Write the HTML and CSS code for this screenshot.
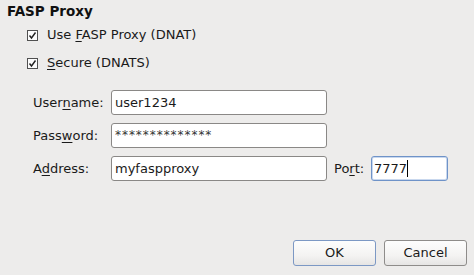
FILE: index.html
```html
<!DOCTYPE html>
<html>
<head>
<meta charset="utf-8">
<link rel="stylesheet" href="styles.css">
</head>
<body>
<div class="dialog">
  <div class="title">FASP Proxy</div>
  <div class="checks">
    <label class="check">
      <svg class="box" width="11" height="11" viewBox="0 0 11 11"><rect x="0.5" y="0.5" width="10" height="10" fill="#fcfcfc" stroke="#505050"/><path d="M2.5 5.5 L4.5 8 L8.5 2.5" fill="none" stroke="#202020" stroke-width="1.4"/></svg>
      <span>Use <u>F</u>ASP Proxy (DNAT)</span>
    </label>
    <label class="check">
      <svg class="box" width="11" height="11" viewBox="0 0 11 11"><rect x="0.5" y="0.5" width="10" height="10" fill="#fcfcfc" stroke="#505050"/><path d="M2.5 5.5 L4.5 8 L8.5 2.5" fill="none" stroke="#202020" stroke-width="1.4"/></svg>
      <span><u>S</u>ecure (DNATS)</span>
    </label>
  </div>
  <div class="form">
    <div class="lbl">User<u>n</u>ame:</div>
    <div class="field">user1234</div>
    <div class="lbl">Pass<u>w</u>ord:</div>
    <div class="field pw">**************</div>
    <div class="lbl">A<u>d</u>dress:</div>
    <div class="field">myfaspproxy</div>
    <div class="lbl port-lbl">Po<u>r</u>t:</div>
    <div class="field focus">7777<span class="caret"></span></div>
  </div>
  <div class="buttons">
    <div class="btn default">OK</div>
    <div class="btn">Cancel</div>
  </div>
</div>
</body>
</html>
```

FILE: styles.css
```css
html, body {
  margin: 0;
  padding: 0;
  background: #edeceb;
}
body {
  font-family: "DejaVu Sans", sans-serif;
  font-size: 13px;
  color: #1a1a1a;
  width: 474px;
  height: 275px;
  overflow: hidden;
}
.dialog {
  height: 275px;
  box-sizing: border-box;
  padding: 3px 7px 9px 7px;
  display: flex;
  flex-direction: column;
}
.title {
  font-weight: bold;
  font-size: 13.5px;
  line-height: 17px;
  color: #111;
}
.checks {
  padding-left: 20px;
  padding-top: 7px;
  display: flex;
  flex-direction: column;
  gap: 12px;
}
.check {
  display: flex;
  align-items: center;
  gap: 9px;
  line-height: 16px;
}
.box {
  display: block;
}
u {
  text-decoration: underline;
  text-underline-offset: 2px;
}
.form {
  margin-top: 19px;
  padding-left: 26px;
  display: grid;
  grid-template-columns: 78px 216px 44px 77px;
  row-gap: 8px;
  align-items: center;
}
.lbl {
  grid-column: 1;
  line-height: 16px;
}
.port-lbl {
  grid-column: 3;
  padding-left: 7px;
}
.field {
  grid-column: 2;
  height: 25px;
  box-sizing: border-box;
  border: 1px solid #8a8886;
  border-radius: 3px;
  background: #fff;
  padding: 0 3px;
  line-height: 23px;
  color: #1a1a1a;
}
.field.focus {
  grid-column: 4;
  border-color: #6f93c8;
  box-shadow: inset 0 0 0 1px #c9d8ee;
  padding-left: 2px;
}
.pw {
  font-size: 12px;
  letter-spacing: 0.95px;
  color: #333;
}
.caret {
  display: inline-block;
  width: 1px;
  height: 17px;
  background: #000;
  vertical-align: -4px;
}
.buttons {
  margin-top: auto;
  display: flex;
  justify-content: flex-end;
  gap: 8px;
}
.btn {
  width: 83px;
  height: 26px;
  box-sizing: border-box;
  border: 1px solid #8e8c8a;
  border-radius: 3px;
  background: linear-gradient(#fdfdfd, #f4f3f2 60%, #e6e5e4);
  text-align: center;
  line-height: 24px;
  color: #1a1a1a;
}
.btn.default {
  border-color: #7c98c4;
}
```
